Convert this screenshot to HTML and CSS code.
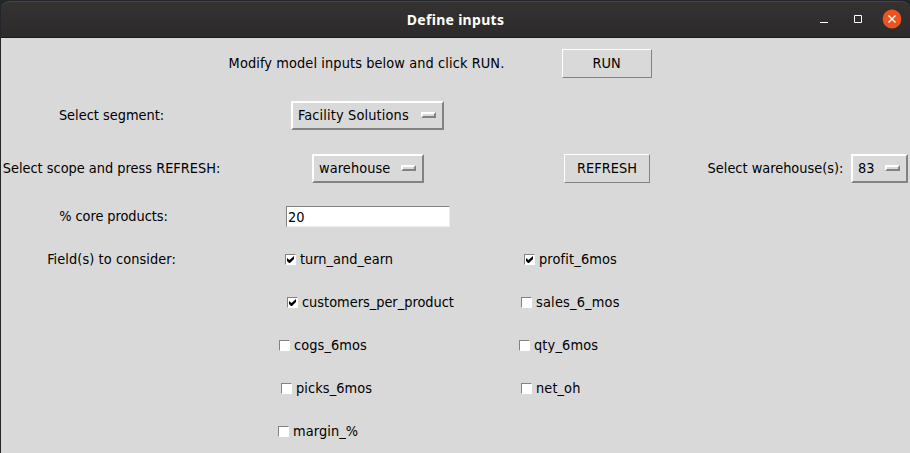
FILE: index.html
```html
<!DOCTYPE html>
<html lang="en">
<head>
<meta charset="utf-8">
<title>Define inputs</title>
<link rel="stylesheet" href="styles.css">
</head>
<body>
<div class="window">
  <header class="titlebar">
    <h1 class="title">Define inputs</h1>
    <div class="controls">
      <svg class="control" width="18" height="18" viewBox="0 0 18 18"><path d="M5 12.500h8" stroke="#fff" fill="none"/></svg>
      <svg class="control" width="18" height="18" viewBox="0 0 18 18"><path d="M5.500 5.500h7v7h-7z" stroke="#fff" fill="none"/></svg>
      <svg class="control" width="20" height="20" viewBox="0 0 20 20"><circle cx="10" cy="10" r="9.400" fill="#e95420"/><path d="M6.500 6.500l7 7M13.500 6.500l-7 7" stroke="#fff" stroke-width="1.400" fill="none"/></svg>
    </div>
  </header>
  <main class="form">
    <span class="intro">Modify model inputs below and click RUN.</span>
    <button class="button button-run">RUN</button>

    <span class="label">Select segment:</span>
    <button class="menu menu-segment">Facility Solutions<i class="indicator"></i></button>

    <span class="label">Select scope and press REFRESH:</span>
    <button class="menu menu-scope">warehouse<i class="indicator"></i></button>
    <button class="button button-refresh">REFRESH</button>
    <span class="label label-warehouse">Select warehouse(s):</span>
    <button class="menu menu-warehouse">83<i class="indicator"></i></button>

    <span class="label label-core">% core products:</span>
    <input class="entry" type="text" value="20">

    <span class="label label-fields">Field(s) to consider:</span>
    <label class="check left turn"><span class="box"><svg width="7" height="7" viewBox="0 0 7 7"><path d="M0 2v3l2 2h1l4-4V0L2.500 4z"/></svg></span>turn_and_earn</label>
    <label class="check right profit"><span class="box"><svg width="7" height="7" viewBox="0 0 7 7"><path d="M0 2v3l2 2h1l4-4V0L2.500 4z"/></svg></span>profit_6mos</label>
    <label class="check left customers"><span class="box"><svg width="7" height="7" viewBox="0 0 7 7"><path d="M0 2v3l2 2h1l4-4V0L2.500 4z"/></svg></span>customers_per_product</label>
    <label class="check right sales"><span class="box"></span>sales_6_mos</label>
    <label class="check left cogs"><span class="box"></span>cogs_6mos</label>
    <label class="check right qty"><span class="box"></span>qty_6mos</label>
    <label class="check left picks"><span class="box"></span>picks_6mos</label>
    <label class="check right net"><span class="box"></span>net_oh</label>
    <label class="check left margin"><span class="box"></span>margin_%</label>
  </main>
</div>
</body>
</html>
```
FILE: styles.css
```css
* { box-sizing: border-box; }
body { margin: 0; width: 910px; height: 453px; overflow: hidden; background: #22252a; }
.window { display: flex; flex-direction: column; height: 453px; padding-left: 1px; }
.titlebar {
  display: grid; grid-template-columns: 1fr auto 1fr; align-items: center;
  height: 38px; padding-right: 8px;
  background: linear-gradient(#353332, #2c2a2a);
  border-top: 1px solid #22252a; border-bottom: 1px solid #1c1a1a;
  border-radius: 8px 8px 0 0; box-shadow: inset 0 1px #454443;
}
.title { grid-column: 2; margin: 0; padding: 2px 0 0 8px; color: #fff; font: bold 14px/20px "Noto Sans", sans-serif; letter-spacing: .3px; }
.controls { display: flex; justify-content: flex-end; align-items: center; gap: 16px; }
.control { display: block; }
.control:nth-child(-n+2) { margin-right: -1px; margin-left: 1px; }
.form {
  display: grid; flex: 1;
  grid-template-columns: 221px 292px 186px 150px 59px;
  grid-template-rows: 51px 53px 53px repeat(6, 43px);
  align-items: center; justify-items: center;
  background: #d9d9d9; color: #000;
  font: 14.4px/17px "DejaVu Sans Condensed", "DejaVu Sans", sans-serif;
  white-space: nowrap;
}
.intro { grid-column: 2; padding-right: 3px; letter-spacing: .1px; }
.label { grid-column: 1; }
.label-core { padding-left: 4px; letter-spacing: -.05px; }
.label-fields { letter-spacing: .08px; }
.label-warehouse { grid-column: 4; padding-left: 1px; }
.button, .menu, .entry { margin: 0; font: inherit; color: inherit; letter-spacing: inherit; border-radius: 0; }
.button {
  grid-column: 3; height: 29px; padding: 0; background: #d9d9d9;
  border: 1px solid; border-color: #fff #828282 #828282 #fff;
}
.button-run { width: 90px; padding-right: 1px; }
.button-refresh { width: 86px; }
.menu {
  display: flex; align-items: center; justify-content: space-between;
  height: 29px; padding: 0 6px 0 5px; background: #d9d9d9;
  border: 2px solid; border-color: #fff #828282 #828282 #fff;
}
.menu-segment { grid-column: 2; width: 153px; margin-right: 1px; letter-spacing: .14px; }
.menu-scope { grid-column: 2; width: 112px; letter-spacing: .1px; }
.menu-warehouse { grid-column: 5; width: 57px; }
.indicator { width: 15px; height: 6px; margin-bottom: 1px; border: 2px solid; border-color: #fff #828282 #828282 #fff; }
.entry {
  grid-column: 2; width: 164px; height: 21px; padding: 0 1px; background: #fff;
  border: 1px solid; border-color: #828282 #ededed #ededed #828282; outline: 0;
}
.check { display: flex; align-items: center; gap: 4px; justify-self: start; }
.left { grid-column: 2; }
.right { grid-column: 3; }
.box {
  display: grid; place-items: center; width: 11px; height: 11px; background: #fff;
  border: 1px solid; border-color: #828282 #fff #fff #828282;
}
.turn { margin-left: 63px; }
.customers { margin-left: 65px; }
.cogs { margin-left: 57px; letter-spacing: .1px; }
.picks { margin-left: 59px; letter-spacing: .1px; }
.margin { margin-left: 56px; letter-spacing: .1px; }
.profit { margin-left: 10px; letter-spacing: .15px; }
.sales { margin-left: 7px; letter-spacing: .2px; }
.net { margin-left: 7px; letter-spacing: .1px; }
.qty { margin-left: 5px; letter-spacing: .15px; }
```
